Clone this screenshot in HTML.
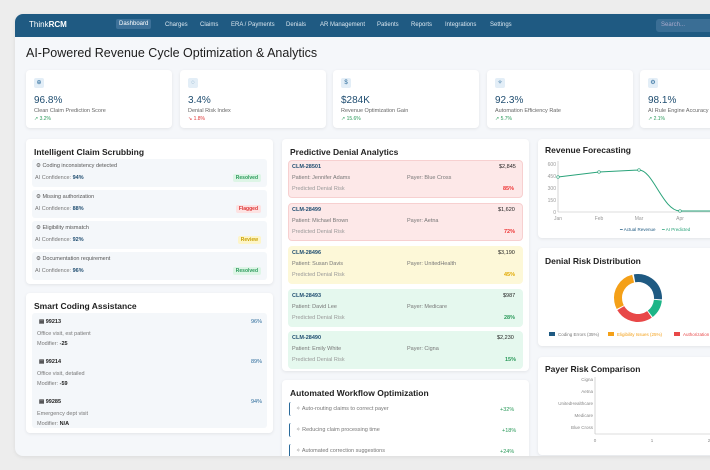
<!DOCTYPE html>
<html><head><meta charset="utf-8"><style>
*{box-sizing:border-box;margin:0;padding:0;white-space:nowrap}
body{width:710px;height:470px;overflow:hidden;background:#ededed;font-family:"Liberation Sans",sans-serif;position:relative;color:#222}
.win{position:absolute;left:15px;top:14px;width:720px;height:442px;background:#f5f7fa;border-radius:8px;overflow:hidden;box-shadow:0 1px 4px rgba(0,0,0,.08)}
.nav{position:absolute;left:0;top:0;right:0;height:23px;background:#1f5a82;color:#dbe7f0;font-size:6px}
.nav span{position:absolute;top:8px}
.card{position:absolute;background:#fff;border-radius:4px;box-shadow:0 1px 3px rgba(0,0,0,.08)}
.h{position:absolute;font-size:8.5px;font-weight:bold;color:#222}
.a{position:absolute}
.kv{font-size:10px;color:#1f4d70;position:absolute;left:8px;top:25px}
.kl{font-size:5.5px;color:#666;position:absolute;left:8px;top:38px}
.kt{font-size:5px;position:absolute;left:8px;top:46px}
.ki{position:absolute;left:8px;top:8px;width:10px;height:10px;border-radius:2px;background:#e3eef7;color:#2a6a9a;font-size:6px;text-align:center;line-height:10px}
.s{font-size:5.5px;color:#777}
.b{font-size:5px;padding:1px 3px;border-radius:2px;font-weight:bold}
.row{position:absolute;left:6px;width:235px;height:28px;background:#f4f7fa;border-radius:3px}
.cl{position:absolute;left:6px;width:235px;height:38px;border-radius:4px}
</style></head><body>
<div class="win">
 <div class="nav">
  <span style="left:14px;top:6px;font-size:8px;color:#fff">Think<b>RCM</b></span>
  <span style="left:101px;top:5px;background:#3d7199;padding:2px 3px;border-radius:2px;color:#fff">Dashboard</span>
  <span style="left:150px">Charges</span><span style="left:185px">Claims</span><span style="left:216px">ERA / Payments</span>
  <span style="left:271px">Denials</span><span style="left:305px">AR Management</span><span style="left:362px">Patients</span>
  <span style="left:396px">Reports</span><span style="left:430px">Integrations</span><span style="left:475px">Settings</span>
  <span style="left:641px;top:5px;width:80px;height:13px;background:#3a6e95;border-radius:3px;padding:3px 5px;color:#aac">Search...</span>
 </div>
 <div class="a" style="left:11px;top:32px;font-size:12.5px;color:#1c1c1c">AI-Powered Revenue Cycle Optimization &amp; Analytics</div>

 <div class="card" style="left:11px;top:56px;width:146px;height:58px"><div class="ki">⊕</div><div class="kv">96.8%</div><div class="kl">Clean Claim Prediction Score</div><div class="kt" style="color:#2a9a5a">↗ 3.2%</div></div>
 <div class="card" style="left:165px;top:56px;width:146px;height:58px"><div class="ki">◌</div><div class="kv">3.4%</div><div class="kl">Denial Risk Index</div><div class="kt" style="color:#d33">↘ 1.8%</div></div>
 <div class="card" style="left:318px;top:56px;width:146px;height:58px"><div class="ki">$</div><div class="kv">$284K</div><div class="kl">Revenue Optimization Gain</div><div class="kt" style="color:#2a9a5a">↗ 15.6%</div></div>
 <div class="card" style="left:472px;top:56px;width:146px;height:58px"><div class="ki">✧</div><div class="kv">92.3%</div><div class="kl">Automation Efficiency Rate</div><div class="kt" style="color:#2a9a5a">↗ 5.7%</div></div>
 <div class="card" style="left:625px;top:56px;width:146px;height:58px"><div class="ki">⚙</div><div class="kv">98.1%</div><div class="kl">AI Rule Engine Accuracy</div><div class="kt" style="color:#2a9a5a">↗ 2.1%</div></div>

 <!-- claim scrubbing -->
 <div class="card" style="left:11px;top:125px;width:247px;height:145px">
  <div class="h" style="left:8px;top:8px">Intelligent Claim Scrubbing</div>
  <div class="row" style="top:20px"><div class="a s" style="left:4px;top:4px;color:#555">⚙ Coding inconsistency detected</div><div class="a s" style="left:3px;top:16px">AI Confidence: <b style="color:#1f4d70">94%</b></div><div class="a b" style="right:6px;top:15px;background:#ddf5e6;color:#2a9a5a">Resolved</div></div>
  <div class="row" style="top:51px"><div class="a s" style="left:4px;top:4px;color:#555">⚙ Missing authorization</div><div class="a s" style="left:3px;top:16px">AI Confidence: <b style="color:#1f4d70">88%</b></div><div class="a b" style="right:6px;top:15px;background:#fde2e2;color:#d33">Flagged</div></div>
  <div class="row" style="top:82px"><div class="a s" style="left:4px;top:4px;color:#555">⚙ Eligibility mismatch</div><div class="a s" style="left:3px;top:16px">AI Confidence: <b style="color:#1f4d70">92%</b></div><div class="a b" style="right:6px;top:15px;background:#fdf5c9;color:#c9a000">Review</div></div>
  <div class="row" style="top:113px"><div class="a s" style="left:4px;top:4px;color:#555">⚙ Documentation requirement</div><div class="a s" style="left:3px;top:16px">AI Confidence: <b style="color:#1f4d70">96%</b></div><div class="a b" style="right:6px;top:15px;background:#ddf5e6;color:#2a9a5a">Resolved</div></div>
 </div>

 <!-- smart coding -->
 <div class="card" style="left:11px;top:279px;width:247px;height:140px">
  <div class="h" style="left:8px;top:8px">Smart Coding Assistance</div>
  <div class="row" style="top:20px;height:115px"></div>
  <div class="a s" style="left:13px;top:26px;color:#222"><b>▤ 99213</b></div><div class="a s" style="left:225px;top:26px;color:#2a6a9a">96%</div>
  <div class="a s" style="left:11px;top:38px">Office visit, est patient</div><div class="a s" style="left:11px;top:48px">Modifier: <b style="color:#222">-25</b></div>
  <div class="a s" style="left:13px;top:66px;color:#222"><b>▤ 99214</b></div><div class="a s" style="left:225px;top:66px;color:#2a6a9a">89%</div>
  <div class="a s" style="left:11px;top:78px">Office visit, detailed</div><div class="a s" style="left:11px;top:88px">Modifier: <b style="color:#222">-59</b></div>
  <div class="a s" style="left:13px;top:106px;color:#222"><b>▤ 99285</b></div><div class="a s" style="left:225px;top:106px;color:#2a6a9a">94%</div>
  <div class="a s" style="left:11px;top:118px">Emergency dept visit</div><div class="a s" style="left:11px;top:128px">Modifier: <b style="color:#222">N/A</b></div>
 </div>

 <!-- denial analytics -->
 <div class="card" style="left:267px;top:125px;width:247px;height:232px">
  <div class="h" style="left:8px;top:8px">Predictive Denial Analytics</div>
  <div class="cl" style="top:21px;background:#fde8e8;border:1px solid #f7d0d0"></div>
  <div class="cl" style="top:64px;background:#fde8e8;border:1px solid #f7d0d0"></div>
  <div class="cl" style="top:107px;background:#fdf8d8"></div>
  <div class="cl" style="top:150px;background:#e5f8ee"></div>
  <div class="cl" style="top:192px;background:#e5f8ee"></div>
 </div>

 <!-- workflow -->
 <div class="card" style="left:267px;top:366px;width:247px;height:90px">
  <div class="h" style="left:8px;top:8px">Automated Workflow Optimization</div>
  <div class="a" style="left:7px;top:22px;width:2px;height:14px;border-left:1.5px solid #2a6a9a;border-radius:4px 0 0 4px"></div>
  <div class="a s" style="left:14px;top:26px">✧ Auto-routing claims to correct payer</div><div class="a s" style="left:218px;top:27px;color:#2a9a5a">+32%</div>
  <div class="a" style="left:7px;top:43px;width:2px;height:14px;border-left:1.5px solid #2a6a9a;border-radius:4px 0 0 4px"></div>
  <div class="a s" style="left:14px;top:47px">✧ Reducing claim processing time</div><div class="a s" style="left:220px;top:48px;color:#2a9a5a">+18%</div>
  <div class="a" style="left:7px;top:64px;width:2px;height:14px;border-left:1.5px solid #2a6a9a;border-radius:4px 0 0 4px"></div>
  <div class="a s" style="left:14px;top:68px">✧ Automated correction suggestions</div><div class="a s" style="left:218px;top:69px;color:#2a9a5a">+24%</div>
 </div>

 <!-- revenue -->
 <div class="card" style="left:523px;top:125px;width:200px;height:99px">
  <div class="h" style="left:7px;top:6px">Revenue Forecasting</div>
  <svg class="a" style="left:0;top:0" width="200" height="99" font-family="Liberation Sans" font-size="5" fill="#999">
   <text x="18" y="27" text-anchor="end">600</text><text x="18" y="39" text-anchor="end">450</text><text x="18" y="51" text-anchor="end">300</text><text x="18" y="63" text-anchor="end">150</text><text x="18" y="75" text-anchor="end">0</text>
   <line x1="20" y1="22" x2="20" y2="73" stroke="#bbb" stroke-width=".6"/><line x1="20" y1="73" x2="200" y2="73" stroke="#bbb" stroke-width=".6"/>
   <text x="20" y="81" text-anchor="middle">Jan</text><text x="61" y="81" text-anchor="middle">Feb</text><text x="101" y="81" text-anchor="middle">Mar</text><text x="142" y="81" text-anchor="middle">Apr</text>
   <path d="M20 38 L61 33 L101 31 C115 31 125 72 142 72 L200 72" fill="none" stroke="#2aa37a" stroke-width="1"/>
   <g fill="#fff" stroke="#2aa37a" stroke-width=".6"><circle cx="20" cy="38" r="1.3"/><circle cx="61" cy="33" r="1.3"/><circle cx="101" cy="31" r="1.3"/><circle cx="142" cy="72" r="1.3"/></g>
   <text x="82" y="92" fill="#1f5a82" font-size="4.5">━ Actual Revenue</text><text x="124" y="92" fill="#2aa37a" font-size="4.5">━ AI Predicted</text>
  </svg>
 </div>

 <!-- denial risk -->
 <div class="card" style="left:523px;top:234px;width:200px;height:98px">
  <div class="h" style="left:7px;top:8px">Denial Risk Distribution</div>
  <svg class="a" style="left:0;top:0" width="200" height="98">
   <g transform="translate(100,50) rotate(-100)" fill="none" stroke-width="8">
    <circle r="20" stroke="#1f5a82" stroke-dasharray="36 90" stroke-dashoffset="0"/>
    <circle r="20" stroke="#1db587" stroke-dasharray="16 110" stroke-dashoffset="-37"/>
    <circle r="20" stroke="#e84848" stroke-dasharray="33 93" stroke-dashoffset="-54"/>
    <circle r="20" stroke="#f4a018" stroke-dasharray="36 90" stroke-dashoffset="-88"/>
   </g>
   <g font-family="Liberation Sans" font-size="4.5"><rect x="11" y="84" width="6" height="4" fill="#1f5a82"/><text x="20" y="88" fill="#777">Coding Errors (35%)</text>
   <rect x="70" y="84" width="6" height="4" fill="#f4a018"/><text x="79" y="88" fill="#f4a018">Eligibility Issues (25%)</text>
   <rect x="136" y="84" width="6" height="4" fill="#e84848"/><text x="145" y="88" fill="#e84848">Authorization Missing</text></g>
  </svg>
 </div>

 <!-- payer -->
 <div class="card" style="left:523px;top:343px;width:200px;height:98px">
  <div class="h" style="left:7px;top:7px">Payer Risk Comparison</div>
  <svg class="a" style="left:0;top:0" width="200" height="98" font-family="Liberation Sans" font-size="4.5" fill="#888">
   <line x1="57" y1="20" x2="57" y2="77" stroke="#bbb" stroke-width=".6"/><line x1="57" y1="77" x2="200" y2="77" stroke="#bbb" stroke-width=".6"/>
   <text x="55" y="24" text-anchor="end">Cigna</text><text x="55" y="36" text-anchor="end">Aetna</text><text x="55" y="48" text-anchor="end">UnitedHealthcare</text><text x="55" y="60" text-anchor="end">Medicare</text><text x="55" y="72" text-anchor="end">Blue Cross</text>
   <text x="57" y="85" text-anchor="middle">0</text><text x="114" y="85" text-anchor="middle">1</text><text x="171" y="85" text-anchor="middle">2</text>
  </svg>
 </div>
</div>

<div style="position:absolute;left:0;top:0;width:710px;height:470px;font-size:5.5px">
 <div class="a" style="left:292px;top:164px;color:#1f4d70;font-weight:bold">CLM-28501</div><div class="a" style="left:499px;top:164px;color:#222">$2,845</div>
 <div class="a s" style="left:292px;top:175px">Patient: Jennifer Adams</div><div class="a s" style="left:407px;top:175px">Payer: Blue Cross</div>
 <div class="a s" style="left:292px;top:186px;color:#999">Predicted Denial Risk</div><div class="a" style="left:503px;top:186px;color:#e33;font-weight:bold">85%</div>

 <div class="a" style="left:292px;top:207px;color:#1f4d70;font-weight:bold">CLM-28499</div><div class="a" style="left:498px;top:207px;color:#222">$1,620</div>
 <div class="a s" style="left:292px;top:218px">Patient: Michael Brown</div><div class="a s" style="left:407px;top:218px">Payer: Aetna</div>
 <div class="a s" style="left:292px;top:229px;color:#999">Predicted Denial Risk</div><div class="a" style="left:504px;top:229px;color:#e33;font-weight:bold">72%</div>

 <div class="a" style="left:292px;top:250px;color:#1f4d70;font-weight:bold">CLM-28496</div><div class="a" style="left:498px;top:250px;color:#222">$3,190</div>
 <div class="a s" style="left:292px;top:261px">Patient: Susan Davis</div><div class="a s" style="left:407px;top:261px">Payer: UnitedHealth</div>
 <div class="a s" style="left:292px;top:272px;color:#999">Predicted Denial Risk</div><div class="a" style="left:504px;top:272px;color:#e0a800;font-weight:bold">45%</div>

 <div class="a" style="left:292px;top:293px;color:#1f4d70;font-weight:bold">CLM-28493</div><div class="a" style="left:503px;top:293px;color:#222">$987</div>
 <div class="a s" style="left:292px;top:304px">Patient: David Lee</div><div class="a s" style="left:407px;top:304px">Payer: Medicare</div>
 <div class="a s" style="left:292px;top:315px;color:#999">Predicted Denial Risk</div><div class="a" style="left:504px;top:315px;color:#2a9a5a;font-weight:bold">28%</div>

 <div class="a" style="left:292px;top:335px;color:#1f4d70;font-weight:bold">CLM-28490</div><div class="a" style="left:497px;top:335px;color:#222">$2,230</div>
 <div class="a s" style="left:292px;top:346px">Patient: Emily White</div><div class="a s" style="left:407px;top:346px">Payer: Cigna</div>
 <div class="a s" style="left:292px;top:357px;color:#999">Predicted Denial Risk</div><div class="a" style="left:505px;top:357px;color:#2a9a5a;font-weight:bold">15%</div>
</div>
</body></html>
